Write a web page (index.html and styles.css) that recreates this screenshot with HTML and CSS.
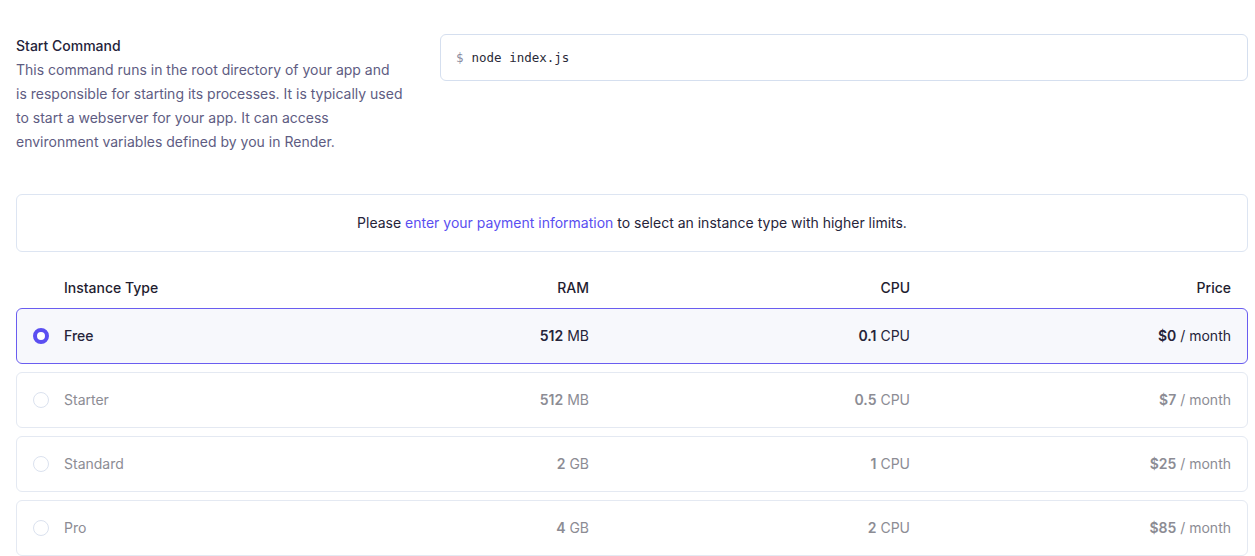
FILE: index.html
```html
<!DOCTYPE html>
<html>
<head>
<meta charset="utf-8">
<link rel="stylesheet" href="styles.css">
</head>
<body>
<div class="page">
  <section class="field">
    <div class="field-info">
      <div class="field-title">Start Command</div>
      <p class="field-desc">This command runs in the root directory of your app and<br>is responsible for starting its processes. It is typically used<br>to start a webserver for your app. It can access<br>environment variables defined by you in Render.</p>
    </div>
    <div class="cmd-input"><span class="prompt">$</span><span class="cmd">node index.js</span></div>
  </section>

  <div class="banner">Please <a class="link" href="#">enter your payment information</a> to select an instance type with higher limits.</div>

  <div class="table">
    <div class="thead">
      <span></span>
      <span class="th name">Instance Type</span>
      <span class="th num">RAM</span>
      <span class="th num">CPU</span>
      <span class="th num">Price</span>
    </div>
    <div class="trow selected">
      <span class="radio on"></span>
      <span class="name">Free</span>
      <span class="num"><b>512</b> MB</span>
      <span class="num"><b>0.1</b> CPU</span>
      <span class="num"><b>$0</b> / month</span>
    </div>
    <div class="trow disabled">
      <span class="radio"></span>
      <span class="name">Starter</span>
      <span class="num"><b>512</b> MB</span>
      <span class="num"><b>0.5</b> CPU</span>
      <span class="num"><b>$7</b> / month</span>
    </div>
    <div class="trow disabled">
      <span class="radio"></span>
      <span class="name">Standard</span>
      <span class="num"><b>2</b> GB</span>
      <span class="num"><b>1</b> CPU</span>
      <span class="num"><b>$25</b> / month</span>
    </div>
    <div class="trow disabled">
      <span class="radio"></span>
      <span class="name">Pro</span>
      <span class="num"><b>4</b> GB</span>
      <span class="num"><b>2</b> CPU</span>
      <span class="num"><b>$85</b> / month</span>
    </div>
  </div>
</div>
</body>
</html>
```

FILE: styles.css
```css
* { box-sizing: border-box; }
html, body { margin: 0; padding: 0; background: #fff; }
body {
  font-family: Inter, "Noto Sans", sans-serif;
  font-size: 14px;
  line-height: 24px;
  color: #26243a;
}
.page {
  padding: 34px 7px 0 16px;
}
.field {
  display: flex;
  gap: 24px;
  align-items: flex-start;
}
.field-info {
  width: 400px;
  flex: none;
}
.field-title {
  font-weight: 500;
  color: #25233a;
}
.field-desc {
  margin: 0;
  color: #5e5c82;
  white-space: nowrap;
}
.cmd-input {
  flex: 1;
  height: 47px;
  border: 1px solid #d5dfef;
  border-radius: 6px;
  padding: 0 15px;
  display: flex;
  align-items: center;
  gap: 8px;
  font-family: "DejaVu Sans Mono", "Liberation Mono", monospace;
  font-size: 12.5px;
  color: #2a2a38;
}
.prompt { color: #8a8aa0; }
.banner {
  margin-top: 40px;
  border: 1px solid #dde5f2;
  border-radius: 6px;
  padding: 16px;
  text-align: center;
  line-height: 24px;
  color: #26243a;
}
.link {
  color: #5a4ff0;
  text-decoration: none;
}
.table {
  margin-top: 24px;
  display: flex;
  flex-direction: column;
  gap: 8px;
}
.thead, .trow {
  display: grid;
  grid-template-columns: 31px 1fr 321px 321px 321px;
  align-items: center;
}
.thead {
  height: 24px;
  padding: 0 17px;
  font-weight: 500;
  color: #1f1d30;
}
.trow {
  height: 56px;
  padding: 0 16px;
  border: 1px solid #e4e9f2;
  border-radius: 6px;
  color: #8c8c94;
}
.trow.selected {
  border-color: #6a5df0;
  background: #f7f8fc;
  color: #26243a;
}
.trow.selected .name { font-weight: 500; }
.trow b { font-weight: 600; }
.num { text-align: right; }
.radio {
  width: 16px;
  height: 16px;
  border-radius: 50%;
  border: 1px solid #dbe2ef;
  background: #fff;
}
.radio.on {
  border: 4px solid #5b4ff1;
}
```
